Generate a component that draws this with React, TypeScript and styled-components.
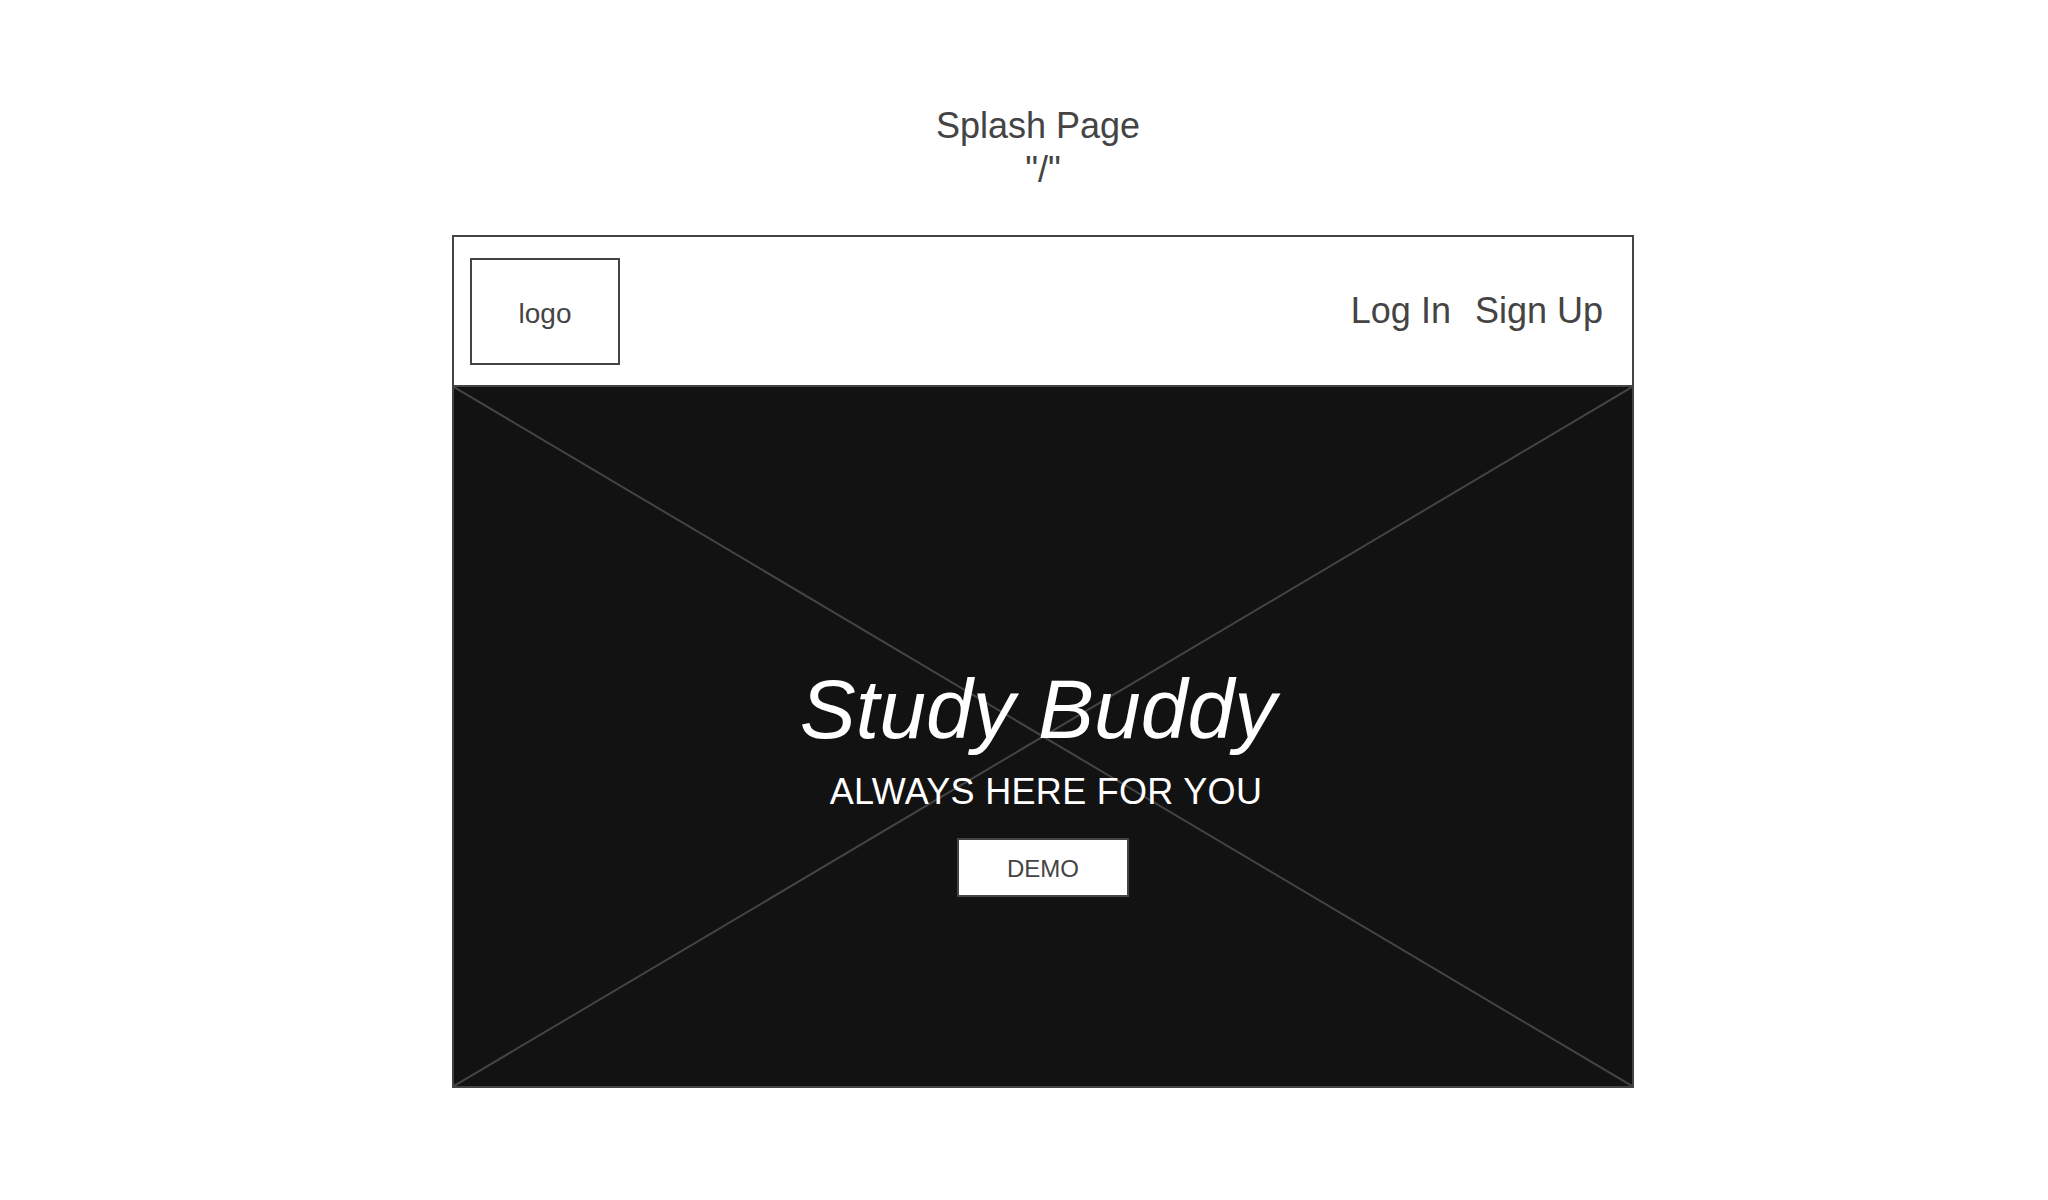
import React from "react";
import styled, { createGlobalStyle } from "styled-components";

const GlobalStyle = createGlobalStyle`
  html, body {
    margin: 0;
    padding: 0;
    background: #ffffff;
  }
  body {
    font-family: "Liberation Sans", Arial, sans-serif;
    color: #444444;
  }
`;

const Page = styled.div`
  width: 1182px;
  margin-left: 452px;
  padding-top: 104px;
  padding-bottom: 112px;
  display: flex;
  flex-direction: column;
`;

const Title = styled.div`
  font-size: 36px;
  line-height: 44px;
  text-align: center;
  white-space: pre;
  color: #444444;
  margin-bottom: 43px;
`;

const Frame = styled.div`
  border: 2px solid #444444;
  display: flex;
  flex-direction: column;
  background: #ffffff;
`;

const Header = styled.header`
  height: 150px;
  padding: 0 29px 0 16px;
  display: flex;
  align-items: center;
  justify-content: space-between;
  border-bottom: 2px solid #444444;
  box-sizing: border-box;
`;

const Logo = styled.div`
  width: 150px;
  height: 107px;
  box-sizing: border-box;
  border: 2px solid #444444;
  display: flex;
  align-items: center;
  justify-content: center;
  font-size: 28px;
  color: #444444;
  padding-top: 6px;
`;

const Nav = styled.nav`
  display: flex;
  align-items: center;
  gap: 24px;
`;

const NavLink = styled.a`
  font-size: 36px;
  line-height: 42px;
  color: #444444;
  text-decoration: none;
  cursor: pointer;
`;

const Hero = styled.section`
  position: relative;
  height: 699px;
  background: #121212;
  overflow: hidden;
  display: flex;
  flex-direction: column;
  align-items: center;
  padding-top: 274px;
  box-sizing: border-box;
`;

/* placeholder cross drawn behind the hero copy */
const Cross = styled.svg`
  position: absolute;
  inset: 0;
  width: 100%;
  height: 100%;
  pointer-events: none;
`;

const Headline = styled.h1`
  position: relative;
  margin: 0 10px 0 0;
  font-size: 84px;
  line-height: 96px;
  font-style: italic;
  font-weight: 400;
  color: #ffffff;
`;

const Tagline = styled.p`
  position: relative;
  margin: 14px 0 0 6px;
  font-size: 36px;
  line-height: 42px;
  letter-spacing: 0.3px;
  color: #ffffff;
`;

const DemoButton = styled.button`
  position: relative;
  margin-top: 25px;
  width: 172px;
  height: 59px;
  box-sizing: border-box;
  border: 2px solid #444444;
  background: #ffffff;
  color: #444444;
  font-family: "Liberation Sans", Arial, sans-serif;
  font-size: 24px;
  padding: 3px 0 0;
  display: flex;
  align-items: center;
  justify-content: center;
  cursor: pointer;
`;

export default function App() {
  return (
    <>
      <GlobalStyle />
      <Page>
        <Title>{"Splash Page \n\"/\""}</Title>
        <Frame>
          <Header>
            <Logo>logo</Logo>
            <Nav>
              <NavLink>Log In</NavLink>
              <NavLink>Sign Up</NavLink>
            </Nav>
          </Header>
          <Hero>
            <Cross viewBox="0 0 100 100" preserveAspectRatio="none">
              <line x1="0" y1="0" x2="100" y2="100" stroke="#444444" strokeWidth="2" vectorEffect="non-scaling-stroke" />
              <line x1="100" y1="0" x2="0" y2="100" stroke="#444444" strokeWidth="2" vectorEffect="non-scaling-stroke" />
            </Cross>
            <Headline>Study Buddy</Headline>
            <Tagline>ALWAYS HERE FOR YOU</Tagline>
            <DemoButton>DEMO</DemoButton>
          </Hero>
        </Frame>
      </Page>
    </>
  );
}
